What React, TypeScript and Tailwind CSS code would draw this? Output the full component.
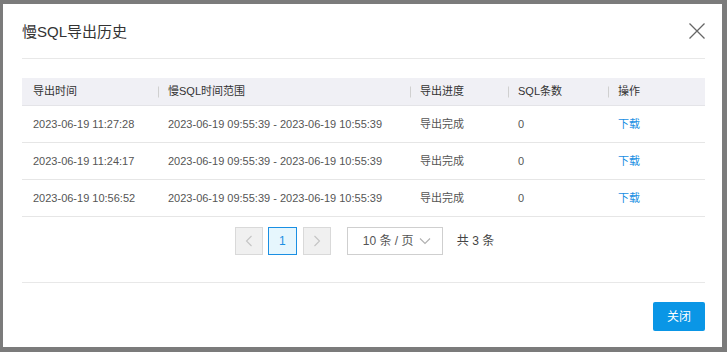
import React from "react";

const rows = [
  ["2023-06-19 11:27:28", "2023-06-19 09:55:39 - 2023-06-19 10:55:39", "导出完成", "0", "下载"],
  ["2023-06-19 11:24:17", "2023-06-19 09:55:39 - 2023-06-19 10:55:39", "导出完成", "0", "下载"],
  ["2023-06-19 10:56:52", "2023-06-19 09:55:39 - 2023-06-19 10:55:39", "导出完成", "0", "下载"],
];

const headers = ["导出时间", "慢SQL时间范围", "导出进度", "SQL条数", "操作"];

const font = { fontFamily: '"Liberation Sans", "Noto Sans CJK SC", Arial, sans-serif' };

function Sep() {
  return <span className="absolute left-0 top-1/2 -translate-y-1/2 w-px h-[11px] bg-[#d0d0d0]" />;
}

export default function App() {
  return (
    <div className="w-[727px] h-[352px] bg-[#7b7b7b] overflow-hidden pt-[4px] pl-[3px]" style={font}>
      <div className="w-[719px] h-[343px] bg-white pl-[19px] pr-[17px] flex flex-col">
        <div className="h-[54px] flex items-center justify-between border-b border-[#e8e8e8] box-content">
          <span className="text-[15px] text-[#333] leading-none pt-[1px]">慢SQL导出历史</span>
          <svg width="18" height="18" viewBox="0 0 18 18" className="mr-[-1px]">
            <path d="M1.5 1.5 L16.5 16.5 M16.5 1.5 L1.5 16.5" stroke="#666" strokeWidth="1.3" fill="none" />
          </svg>
        </div>

        <div className="mt-[19px] text-[11px] text-[#333]">
          <div className="grid grid-cols-[136px_252px_98px_100px_1fr] h-[28px] bg-[#f0f0f5] border-b border-[#e4e4e8] items-center">
            {headers.map((h, i) => (
              <div key={h} className={`relative h-full flex items-center ${i === 0 ? "pl-[11px]" : "pl-[10px]"}`}>
                {i > 0 && <Sep />}
                <span className="text-[#333]">{h}</span>
              </div>
            ))}
          </div>
          {rows.map((r, ri) => (
            <div key={ri} className="grid grid-cols-[136px_252px_98px_100px_1fr] h-[37px] border-b border-[#e6e6e6] items-center text-[#555]">
              {r.map((c, i) => (
                <div key={i} className={`${i === 0 ? "pl-[11px]" : "pl-[10px]"} ${i === 4 ? "text-[#1a8fe3]" : ""}`}>
                  {c}
                </div>
              ))}
            </div>
          ))}
        </div>

        <div className="mt-[10px] flex items-center justify-center h-[28px] text-[12px] pl-[2px]">
          <div className="w-[28px] h-[28px] border border-[#d9d9d9] bg-[#f0f0f0] flex items-center justify-center">
            <svg width="8" height="12" viewBox="0 0 8 12"><path d="M6.5 1 L1.5 6 L6.5 11" stroke="#c4c4c4" strokeWidth="1.1" fill="none" /></svg>
          </div>
          <div className="ml-[5px] w-[29px] h-[28px] border border-[#1a8fe3] bg-[#e6f6fd] text-[#1a8fe3] flex items-center justify-center">1</div>
          <div className="ml-[6px] w-[28px] h-[28px] border border-[#d9d9d9] bg-[#f0f0f0] flex items-center justify-center">
            <svg width="8" height="12" viewBox="0 0 8 12"><path d="M1.5 1 L6.5 6 L1.5 11" stroke="#c4c4c4" strokeWidth="1.1" fill="none" /></svg>
          </div>
          <div className="ml-[16px] w-[96px] h-[28px] border border-[#cfcfcf] flex items-center pl-[15px] pr-[11px] justify-between text-[#555]">
            <span>10 条 / 页</span>
            <svg width="12" height="8" viewBox="0 0 12 8"><path d="M1 1.5 L6 6.5 L11 1.5" stroke="#b0b0b0" strokeWidth="1.1" fill="none" /></svg>
          </div>
          <span className="ml-[14px] text-[#444]">共 3 条</span>
        </div>

        <div className="mt-[27px] border-t border-[#e8e8e8]" />

        <div className="mt-[19px] flex justify-end">
          <button className="w-[52px] h-[29px] bg-[#0a96e6] text-white text-[12px] rounded-[2px]">关闭</button>
        </div>
      </div>
    </div>
  );
}
